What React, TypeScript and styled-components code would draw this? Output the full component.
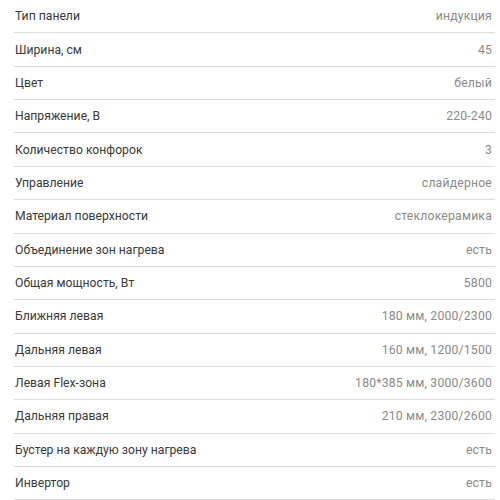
import React from "react";
import styled, { createGlobalStyle } from "styled-components";

const Global = createGlobalStyle`
  html, body { margin: 0; padding: 0; background: #ffffff; }
`;

const Table = styled.div`
  width: 500px;
  box-sizing: border-box;
  padding: 0 5px 0 14px;
  font-family: Roboto, "Liberation Sans", sans-serif;
  font-size: 12.2px;
`;

const Row = styled.div`
  display: flex;
  justify-content: space-between;
  align-items: center;
  height: 33.36px;
  box-sizing: border-box;
  border-bottom: 1px solid #dcdcdc;
`;

const Label = styled.span`
  color: #3a3a3a;
  padding-left: 1px;
`;

const Value = styled.span`
  color: #8a8a8a;
  padding-right: 3px;
  letter-spacing: 0.2px;
`;

const specs: [string, string][] = [
  ["Тип панели", "индукция"],
  ["Ширина, см", "45"],
  ["Цвет", "белый"],
  ["Напряжение, В", "220-240"],
  ["Количество конфорок", "3"],
  ["Управление", "слайдерное"],
  ["Материал поверхности", "стеклокерамика"],
  ["Объединение зон нагрева", "есть"],
  ["Общая мощность, Вт", "5800"],
  ["Ближняя левая", "180 мм, 2000/2300"],
  ["Дальняя левая", "160 мм, 1200/1500"],
  ["Левая Flex-зона", "180*385 мм, 3000/3600"],
  ["Дальняя правая", "210 мм, 2300/2600"],
  ["Бустер на каждую зону нагрева", "есть"],
  ["Инвертор", "есть"],
];

export default function App() {
  return (
    <>
      <Global />
      <Table>
        {specs.map(([k, v]) => (
          <Row key={k}>
            <Label>{k}</Label>
            <Value>{v}</Value>
          </Row>
        ))}
      </Table>
    </>
  );
}
